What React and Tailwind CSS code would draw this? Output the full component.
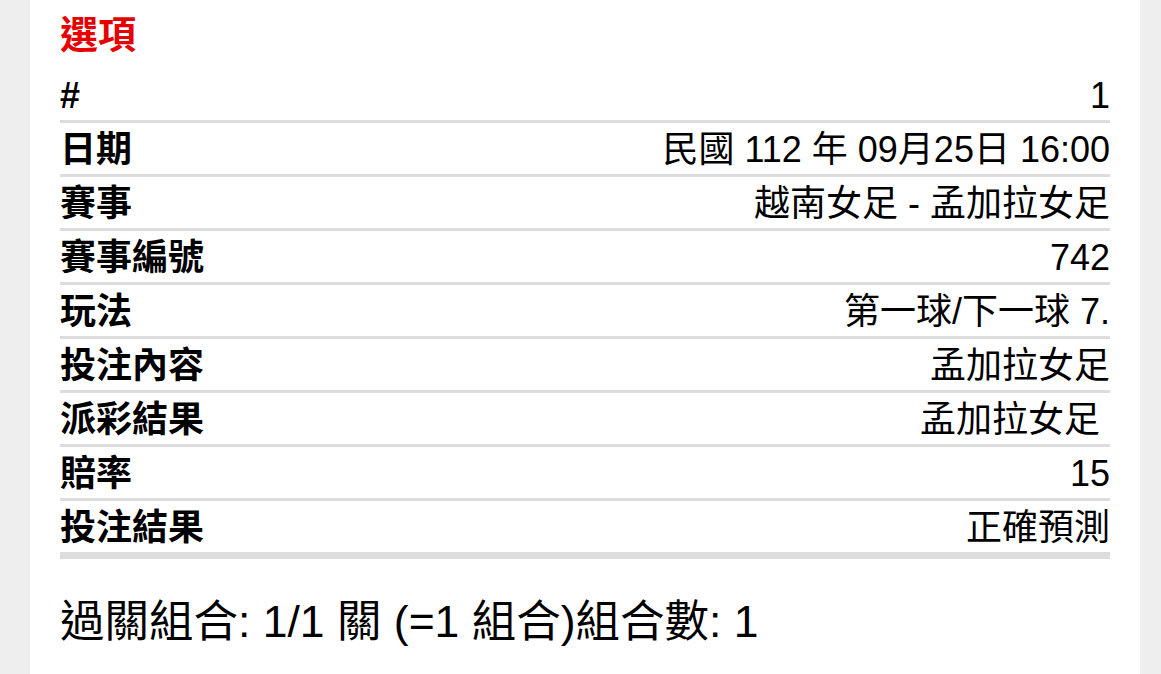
import React from "react";

const rows = [
  ["#", "1"],
  ["日期", "民國 112 年 09月25日 16:00"],
  ["賽事", "越南女足 - 孟加拉女足"],
  ["賽事編號", "742"],
  ["玩法", "第一球/下一球 7."],
  ["投注內容", "孟加拉女足"],
  ["派彩結果", "孟加拉女足\u00a0"],
  ["賠率", "15"],
  ["投注結果", "正確預測"],
];

export default function App() {
  return (
    <div
      className="w-full min-h-screen bg-[#eeeeee] pl-[30px] pr-[21px] text-black"
      style={{ fontFamily: '"Liberation Sans", "Noto Sans CJK TC", sans-serif' }}
    >
      <div className="bg-white min-h-screen px-[30px] pt-[11px]">
        <h2 className="text-[38px] leading-[48px] font-bold text-[#e60000] mb-[10px]">選項</h2>
        <div>
          {rows.map(([k, v], i) => (
            <div
              key={k}
              className={
                "flex items-center justify-between pt-[3px] h-[54px] border-[#dddddd] " +
                (i === rows.length - 1 ? "border-b-[7px] h-[58px]" : "border-b-[3px]")
              }
            >
              <span className="text-[36px] font-bold leading-none">{k}</span>
              <span className="text-[36px] leading-none whitespace-pre">{v}</span>
            </div>
          ))}
        </div>
        <div className="pt-[38px] text-[44.5px] leading-[50px]">
          過關組合: 1/1 關 (=1 組合)組合數: 1
        </div>
      </div>
    </div>
  );
}
